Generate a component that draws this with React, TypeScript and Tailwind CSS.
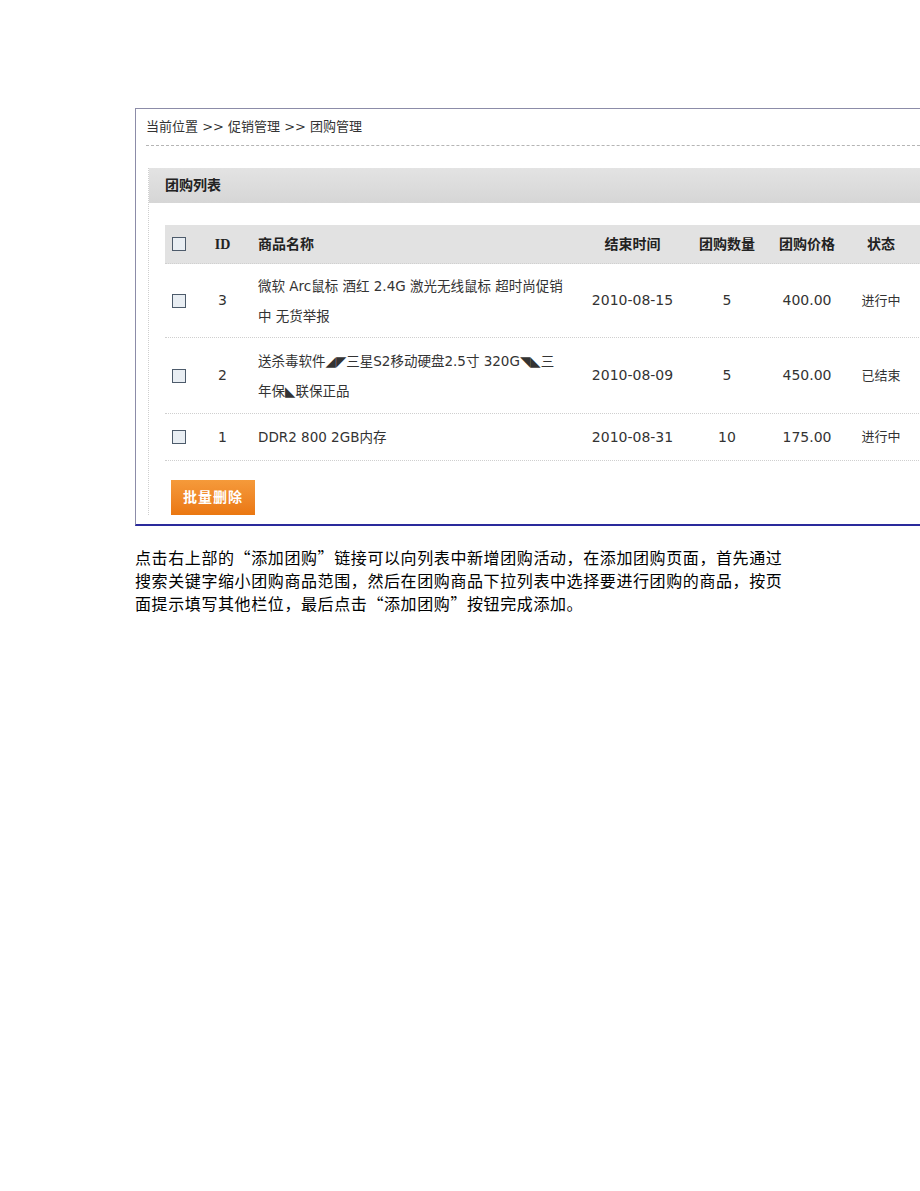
import React from "react";

const cjk = '"DejaVu Sans", "Noto Sans CJK SC", sans-serif';

function Box() {
  return <span className="inline-block w-[14px] h-[14px] border border-[#4d5b6b] bg-[#e9eef3]" />;
}

const cols = "grid grid-cols-[30px_50px_340px_95px_94px_66px_82px] items-center";

type Row = { id: string; name: React.ReactNode; date: string; qty: string; price: string; status: string; h: string };

const rows: Row[] = [
  {
    id: "3",
    name: (
      <>
        微软 Arc鼠标 酒红 2.4G 激光无线鼠标 超时尚促销
        <br />
        中 无货举报
      </>
    ),
    date: "2010-08-15",
    qty: "5",
    price: "400.00",
    status: "进行中",
    h: "h-[74px]",
  },
  {
    id: "2",
    name: (
      <>
        送杀毒软件◢◤三星S2移动硬盘2.5寸 320G◥◣三
        <br />
        年保◣联保正品
      </>
    ),
    date: "2010-08-09",
    qty: "5",
    price: "450.00",
    status: "已结束",
    h: "h-[76px]",
  },
  { id: "1", name: "DDR2 800 2GB内存", date: "2010-08-31", qty: "10", price: "175.00", status: "进行中", h: "h-[47px]" },
];

export default function App() {
  return (
    <div className="w-[920px] h-[1191px] bg-white overflow-hidden" style={{ fontFamily: cjk }}>
      <div className="pt-[108px] pl-[135px]">
        <div className="w-[800px] border-t border-l border-[#8c8ca8] border-b-2 border-b-[#2a2a9c] pb-[9px]">
          <div className="ml-[10px] h-[37px] flex items-center border-b border-dashed border-[#b5b5b5] text-[13px] text-[#333]">
            当前位置 &gt;&gt; 促销管理 &gt;&gt; 团购管理
          </div>
          <div className="mt-[22px] ml-[12px] border-l border-dotted border-[#cfcfcf]">
            <div className="h-[35px] bg-gradient-to-b from-[#e3e3e3] to-[#d6d6d6] flex items-center pl-[16px] text-[14px] font-bold text-[#222]">
              团购列表
            </div>
            <div className="ml-[16px] mt-[22px] text-[14px] text-[#333]">
              <div className={`${cols} h-[39px] bg-[#e2e2e2] border-b border-dotted border-[#d0d0d0] font-bold text-[#222]`}>
                <div className="pl-[7px] flex items-center"><Box /></div>
                <div className="text-center pl-[5px]" style={{ fontFamily: '"Liberation Serif", serif' }}>ID</div>
                <div className="pl-[13px]">商品名称</div>
                <div className="text-center">结束时间</div>
                <div className="text-center">团购数量</div>
                <div className="text-center">团购价格</div>
                <div className="text-center">状态</div>
              </div>
              {rows.map((r) => (
                <div key={r.id} className={`${cols} ${r.h} border-b border-dotted border-[#cfcfcf]`}>
                  <div className="pl-[7px] flex items-center"><Box /></div>
                  <div className="text-center pl-[5px]">{r.id}</div>
                  <div className="pl-[13px] leading-[30px] text-[13.5px]">{r.name}</div>
                  <div className="text-center">{r.date}</div>
                  <div className="text-center">{r.qty}</div>
                  <div className="text-center">{r.price}</div>
                  <div className="text-center text-[13px]">{r.status}</div>
                </div>
              ))}
              <div className="mt-[19px] ml-[6px] w-[84px] h-[35px] bg-gradient-to-b from-[#f59a3a] to-[#ea7710] flex items-center justify-center text-white font-bold text-[14px] tracking-[1px]">
                批量删除
              </div>
            </div>
          </div>
        </div>
        <div className="mt-[20px] text-[16px] leading-[23px] text-black tracking-[0.6px]" style={{ fontFamily: '"Noto Sans CJK SC", sans-serif' }}>
          点击右上部的“添加团购”链接可以向列表中新增团购活动，在添加团购页面，首先通过
          <br />
          搜索关键字缩小团购商品范围，然后在团购商品下拉列表中选择要进行团购的商品，按页
          <br />
          面提示填写其他栏位，最后点击“添加团购”按钮完成添加。
        </div>
      </div>
    </div>
  );
}
